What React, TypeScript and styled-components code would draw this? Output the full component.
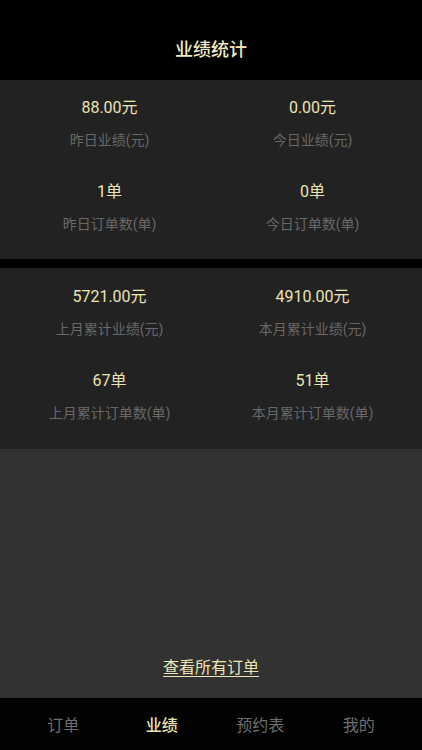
import React from "react";
import styled, { createGlobalStyle } from "styled-components";

const Global = createGlobalStyle`
  html, body { margin: 0; padding: 0; background: #000; }
  body { font-family: Roboto, "Noto Sans CJK SC", sans-serif; }
  #root { height: 750px; }
`;

const Page = styled.div`
  height: 750px;
  display: flex;
  flex-direction: column;
  background: #000;
`;

const Header = styled.header`
  height: 80px;
  flex: none;
  display: flex;
  align-items: center;
  justify-content: center;
  color: #f1e9c3;
  font-size: 18px;
  font-weight: 500;
  padding-top: 15px;
  box-sizing: border-box;
`;

const Panel = styled.section<{ $h: number; $gap?: number; $top?: number }>`
  height: ${(p) => p.$h}px;
  flex: none;
  background: #222222;
  margin-bottom: ${(p) => p.$gap ?? 0}px;
  display: grid;
  grid-template-columns: 1fr 1fr;
  grid-auto-rows: 84px;
  padding: ${(p) => p.$top ?? 0}px 8px 0;
  box-sizing: border-box;
`;

const Cell = styled.div`
  display: flex;
  flex-direction: column;
  align-items: center;
  padding-top: 16px;
  gap: 8px;
`;

const Value = styled.div`
  color: #ede4b4;
  font-size: 16px;
  line-height: 24px;
`;

const Label = styled.div`
  color: #686868;
  font-size: 14px;
  line-height: 24px;
`;

const Body = styled.div`
  flex: 1;
  background: #323232;
  display: flex;
  align-items: flex-end;
  justify-content: center;
  padding-bottom: 18px;
`;

const Link = styled.a`
  color: #ede4b4;
  font-size: 16px;
  line-height: 24px;
  text-decoration: underline;
  text-underline-offset: 3px;
`;

const TabBar = styled.nav`
  height: 52px;
  flex: none;
  display: grid;
  grid-template-columns: repeat(4, 1fr);
  padding: 0 14px;
  background: #020202;
`;

const Tab = styled.div<{ $active?: boolean }>`
  display: flex;
  align-items: center;
  justify-content: center;
  font-size: 16px;
  color: ${(p) => (p.$active ? "#ede4b4" : "#6e6e6e")};
  font-weight: ${(p) => (p.$active ? 500 : 400)};
`;

const stat1 = [
  ["88.00元", "昨日业绩(元)"],
  ["0.00元", "今日业绩(元)"],
  ["1单", "昨日订单数(单)"],
  ["0单", "今日订单数(单)"],
];
const stat2 = [
  ["5721.00元", "上月累计业绩(元)"],
  ["4910.00元", "本月累计业绩(元)"],
  ["67单", "上月累计订单数(单)"],
  ["51单", "本月累计订单数(单)"],
];

export default function App() {
  return (
    <Page>
      <Global />
      <Header>业绩统计</Header>
      <Panel $h={179} $gap={9}>
        {stat1.map(([v, l]) => (
          <Cell key={l}>
            <Value>{v}</Value>
            <Label>{l}</Label>
          </Cell>
        ))}
      </Panel>
      <Panel $h={181} $top={1}>
        {stat2.map(([v, l]) => (
          <Cell key={l}>
            <Value>{v}</Value>
            <Label>{l}</Label>
          </Cell>
        ))}
      </Panel>
      <Body>
        <Link>查看所有订单</Link>
      </Body>
      <TabBar>
        <Tab>订单</Tab>
        <Tab $active>业绩</Tab>
        <Tab>预约表</Tab>
        <Tab>我的</Tab>
      </TabBar>
    </Page>
  );
}
